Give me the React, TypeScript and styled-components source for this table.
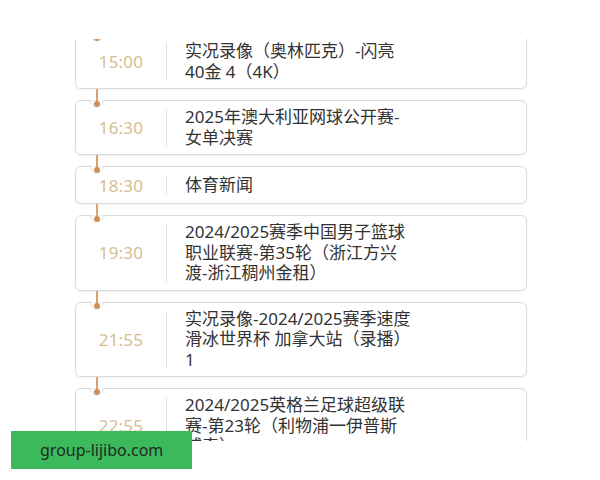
import React from "react";
import styled, { createGlobalStyle } from "styled-components";

const Global = createGlobalStyle`
  html, body { margin: 0; padding: 0; background: #ffffff; }
  * { box-sizing: border-box; }
`;

const Page = styled.div`
  position: relative;
  width: 600px;
  height: 480px;
  background: #ffffff;
  overflow: hidden;
  font-family: "Noto Sans", "Noto Sans CJK SC", sans-serif;
`;

const Viewport = styled.div`
  margin-top: 39px;
  height: 402px;
  overflow: hidden;
  padding-left: 75px;
`;

const List = styled.div`
  width: 452px;
  margin-top: -5px;
  display: flex;
  flex-direction: column;
  gap: 11px;
`;

const Card = styled.div<{ $single?: boolean }>`
  position: relative;
  display: grid;
  grid-template-columns: 90px 1px 1fr;
  align-items: center;
  padding: 6px 0;
  min-height: ${(p) => (p.$single ? "38px" : "0")};
  border: 1px solid #dadada;
  border-radius: 6px;
  background: #ffffff;
  box-shadow: 0 1px 2px rgba(0, 0, 0, 0.05);
`;

const Time = styled.div`
  text-align: center;
  font-family: "Noto Sans", sans-serif;
  font-size: 17px;
  color: #d6be93;
  letter-spacing: 0.2px;
`;

const Divider = styled.div`
  align-self: stretch;
  margin: 2px 0;
  background: #e2e2e2;
`;

const Title = styled.div`
  padding-left: 18px;
  font-family: "Noto Sans", "Noto Sans CJK SC", sans-serif;
  font-size: 17px;
  line-height: 20.5px;
  color: #333333;
`;

const Line = styled.span`
  display: block;
  white-space: nowrap;
`;

const ConnectorSvg = styled.svg`
  position: absolute;
  left: 14px;
  top: -12px;
  overflow: visible;
`;

function Connector() {
  return (
    <ConnectorSvg width="14" height="22" viewBox="0 0 14 22">
      <line x1="7" y1="0" x2="7" y2="15" stroke="#d8a472" strokeWidth="2" />
      <path d="M0.5 11.5 A6.5 6.5 0 0 0 13.5 11.5 Z" fill="#ffffff" />
      <path d="M0.5 11.5 A6.5 6.5 0 0 0 13.5 11.5" fill="none" stroke="#e3e3e3" strokeWidth="1" />
      <line x1="7" y1="10" x2="7" y2="15" stroke="#d8a472" strokeWidth="2" />
      <circle cx="7" cy="15" r="3" fill="#d08f58" />
    </ConnectorSvg>
  );
}

const Badge = styled.div`
  position: absolute;
  left: 11px;
  top: 431px;
  width: 181px;
  height: 38px;
  background: #3cb95b;
  display: flex;
  align-items: center;
  padding-left: 29px;
  font-family: "Noto Sans", sans-serif;
  font-size: 16px;
  color: #1f2a22;
`;

const items: { time: string; lines: string[] }[] = [
  { time: "15:00", lines: ["实况录像（奥林匹克）-闪亮", "40金 4（4K）"] },
  { time: "16:30", lines: ["2025年澳大利亚网球公开赛-", "女单决赛"] },
  { time: "18:30", lines: ["体育新闻"] },
  {
    time: "19:30",
    lines: ["2024/2025赛季中国男子篮球", "职业联赛-第35轮（浙江方兴", "渡-浙江稠州金租）"],
  },
  {
    time: "21:55",
    lines: ["实况录像-2024/2025赛季速度", "滑冰世界杯 加拿大站（录播）", "1"],
  },
  {
    time: "22:55",
    lines: ["2024/2025英格兰足球超级联", "赛-第23轮（利物浦一伊普斯", "威奇）"],
  },
];

export default function App() {
  return (
    <Page>
      <Global />
      <Viewport>
        <List>
          {items.map((it) => (
            <Card key={it.time} $single={it.lines.length === 1}>
              <Connector />
              <Time>{it.time}</Time>
              <Divider />
              <Title>
                {it.lines.map((l, i) => (
                  <Line key={i}>{l}</Line>
                ))}
              </Title>
            </Card>
          ))}
        </List>
      </Viewport>
      <Badge>group-lijibo.com</Badge>
    </Page>
  );
}
